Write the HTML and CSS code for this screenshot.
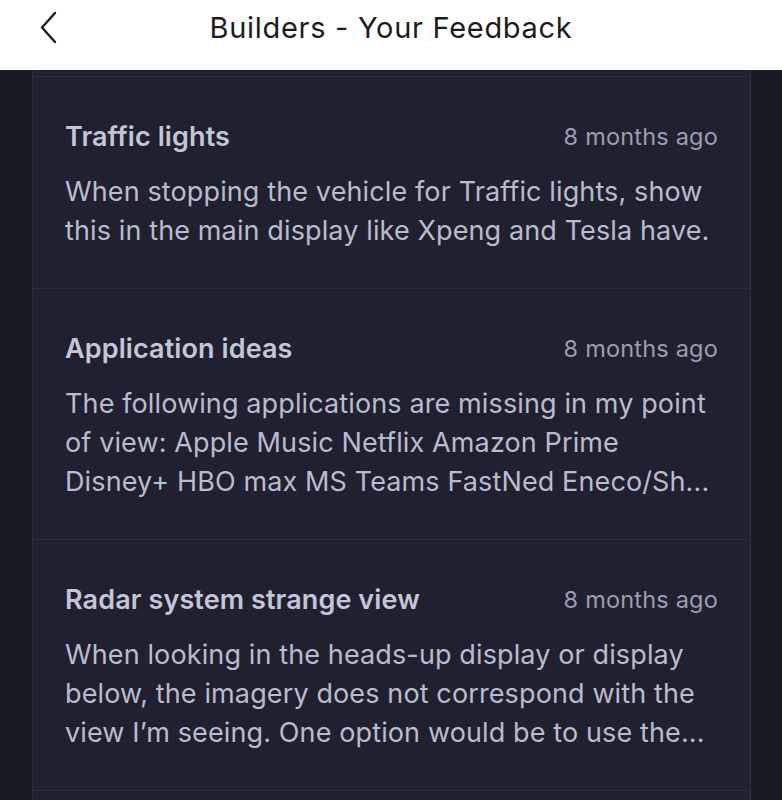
FILE: index.html
```html
<!DOCTYPE html>
<html>
<head>
<meta charset="utf-8">
<link rel="stylesheet" href="styles.css">
</head>
<body>
<header class="topbar">
  <svg class="back" width="24" height="36" viewBox="0 0 24 36"><path d="M15 2 L2 16.5 L15 31" fill="none" stroke="#1c1c1e" stroke-width="2.4" stroke-linecap="round" stroke-linejoin="round"/></svg>
  <h1 class="title">Builders - Your Feedback</h1>
</header>
<main class="page">
  <div class="card">
    <div class="stub"></div>
    <div class="item">
      <div class="item-head"><span class="item-title">Traffic lights</span><span class="item-time">8 months ago</span></div>
      <p class="item-body">When stopping the vehicle for Traffic lights, show this in the main display like Xpeng and Tesla have.</p>
    </div>
    <div class="item">
      <div class="item-head"><span class="item-title">Application ideas</span><span class="item-time">8 months ago</span></div>
      <p class="item-body">The following applications are missing in my point of view: Apple Music Netflix Amazon Prime Disney+ HBO max MS Teams FastNed Eneco/Sh...</p>
    </div>
    <div class="item">
      <div class="item-head"><span class="item-title">Radar system strange view</span><span class="item-time">8 months ago</span></div>
      <p class="item-body">When looking in the heads-up display or display below, the imagery does not correspond with the view I’m seeing. One option would be to use the...</p>
    </div>
    <div class="item"></div>
  </div>
</main>
</body>
</html>
```
FILE: styles.css
```css
html, body { margin: 0; padding: 0; }
body {
  background: #191b22;
  font-family: Inter, "Noto Sans", sans-serif;
  width: 782px;
  height: 800px;
  overflow: hidden;
}
.topbar {
  height: 70px;
  background: #ffffff;
  display: flex;
  align-items: center;
  justify-content: center;
  position: relative;
}
.back {
  position: absolute;
  left: 40px;
  top: 11px;
}
.title {
  margin: 0 0 16px 0;
  font-family: Inter, "Noto Sans", sans-serif;
  font-weight: 400;
  font-size: 29px;
  color: #1c1c1e;
  letter-spacing: 0.7px;
}
.page {
  padding: 0 31px 0 32px;
}
.card {
  background: #1f2130;
  border-left: 1px solid #2b2e3b;
  border-right: 1px solid #2b2e3b;
}
.stub { height: 6px; }
.item {
  border-top: 1.5px solid #2b2e3b;
  padding: 40px 20px 38px 32px;
}
.item-head {
  display: flex;
  justify-content: space-between;
  align-items: center;
  height: 39px;
  margin: 0 12px 16px 0;
}
.item-title {
  font-size: 27px;
  font-weight: 600;
  color: #c3c6d5;
  letter-spacing: 0.1px;
}
.item-time {
  font-size: 23.5px;
  color: #9a9eae;
  letter-spacing: 0.2px;
}
.item-body {
  margin: 0;
  font-size: 27px;
  line-height: 39px;
  color: #b9bccb;
  letter-spacing: 0.12px;
}
```
